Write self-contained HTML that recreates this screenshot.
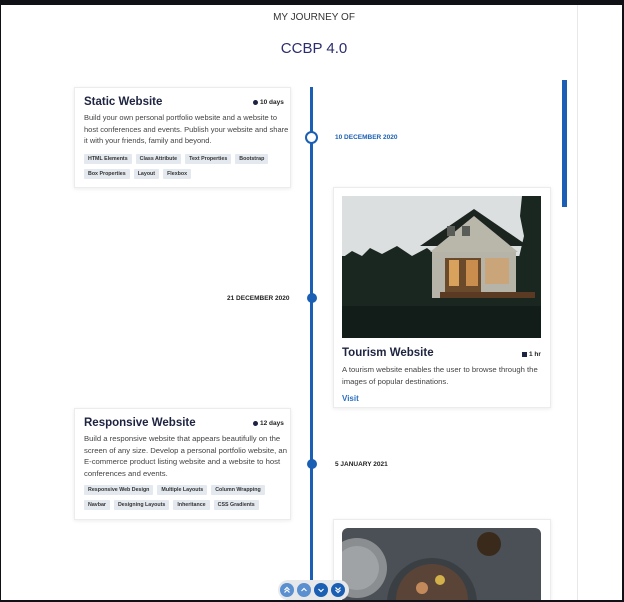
<!DOCTYPE html>
<html><head><meta charset="utf-8"><style>
*{margin:0;padding:0;box-sizing:border-box}
body{width:624px;height:602px;background:#0f1117;position:relative;overflow:hidden;font-family:"Liberation Sans",sans-serif}
.page{position:absolute;left:1px;top:5px;width:621px;height:595px;background:#fff;overflow:hidden}
.abs{position:absolute}
.h1{left:0;width:626px;text-align:center;top:7px;font-size:10px;color:#333;}
.h2{left:0;width:626px;text-align:center;top:35px;font-size:15px;color:#2b2d6e;}
.card{position:absolute;background:#fff;border:1px solid #ececec;box-shadow:0 1px 4px rgba(0,0,0,0.08);overflow:hidden}
.title{position:absolute;font-weight:bold;font-size:11.5px;color:#1d2340}
.dur{position:absolute;font-size:6.5px;font-weight:bold;color:#222}
.dur i{display:inline-block;width:5px;height:5px;border-radius:50%;background:#1d2340;margin-right:2px;vertical-align:-0.5px}
.desc{position:absolute;font-size:7.7px;line-height:11.5px;color:#444}
.tags{position:absolute;display:flex;flex-wrap:wrap;row-gap:5px;column-gap:4px}
.tag{display:block;background:#e3e9ef;font-size:5.3px;line-height:10px;height:10px;font-weight:bold;color:#333;padding:0 4px;border-radius:1px}
.date{position:absolute;font-size:6.5px;font-weight:bold;color:#222}
.nb{position:absolute;top:578px;width:14px;height:14px;border-radius:50%}
</style></head><body>
<div class="page">
<div class="abs h1">MY JOURNEY OF</div>
<div class="abs h2">CCBP 4.0</div>
<div class="abs" style="left:309px;top:82px;width:3px;height:520px;background:#1a5fb4"></div>
<div class="abs" style="left:304px;top:126px;width:13px;height:13px;border-radius:50%;border:2px solid #1a5fb4;background:#fff"></div>
<div class="abs" style="left:306px;top:288px;width:10px;height:10px;border-radius:50%;background:#1a5fb4"></div>
<div class="abs" style="left:306px;top:454px;width:10px;height:10px;border-radius:50%;background:#1a5fb4"></div>
<div class="date" style="left:334px;top:129px;color:#1a5fb4">10 DECEMBER 2020</div>
<div class="date" style="left:226px;top:290px">21 DECEMBER 2020</div>
<div class="date" style="left:334px;top:456px">5 JANUARY 2021</div>
<div class="abs" style="left:576px;top:0;width:1px;height:595px;background:#e8e8e8"></div>
<div class="abs" style="left:561px;top:75px;width:5px;height:127px;background:#1a5fb4"></div>
<!-- card 1 -->
<div class="card" style="left:73px;top:82px;width:217px;height:101px">
<div class="title" style="left:9px;top:8px">Static Website</div>
<div class="dur" style="left:178px;top:11px"><i></i>10 days</div>
<div class="desc" style="left:9px;top:24px;width:206px;font-size:7.5px">Build your own personal portfolio website and a website to host conferences and events. Publish your website and share it with your friends, family and beyond.</div>
<div class="tags" style="left:9px;top:66px;width:205px"><span class="tag">HTML Elements</span><span class="tag">Class Attribute</span><span class="tag">Text Properties</span><span class="tag">Bootstrap</span><span class="tag">Box Properties</span><span class="tag">Layout</span><span class="tag">Flexbox</span></div>
</div>
<!-- card 2 -->
<div class="card" style="left:332px;top:182px;width:218px;height:221px">
<svg class="abs" style="left:8px;top:8px" width="199" height="142" viewBox="0 0 199 142">
<rect width="199" height="142" fill="#dcdfe0"/>
<rect y="60" width="199" height="82" fill="#1a2620"/>
<path d="M0 62 L10 55 L20 60 L28 52 L40 58 L55 50 L70 60 L85 52 L95 60 L0 70Z" fill="#1a2620"/>
<path d="M180 0 L199 0 L199 80 L175 70 L182 40 L178 20Z" fill="#1a2620"/>
<rect y="110" width="199" height="32" fill="#121c18"/>
<path d="M78 50 L132 13 L186 50Z" fill="#1c2420"/>
<path d="M88 56 L132 20 L176 56Z" fill="#b9b7aa"/>
<rect x="90" y="56" width="84" height="46" fill="#b6b4a8"/>
<rect x="103" y="62" width="36" height="34" fill="#6b4a2c"/>
<rect x="107" y="64" width="10" height="26" fill="#d9a25c"/>
<rect x="124" y="64" width="12" height="26" fill="#c98e4e"/>
<rect x="143" y="62" width="24" height="26" fill="#caa57a"/>
<rect x="105" y="30" width="8" height="10" fill="#5a5c58"/>
<rect x="120" y="30" width="8" height="10" fill="#5a5c58"/>
<rect x="98" y="96" width="95" height="6" fill="#5a3a22"/>
</svg>
<div class="title" style="left:8px;top:159px">Tourism Website</div>
<div class="dur" style="left:188px;top:163px"><i style="border-radius:0"></i>1 hr</div>
<div class="desc" style="left:8px;top:176px;width:205px">A tourism website enables the user to browse through the images of popular destinations.</div>
<div class="abs" style="left:8px;top:206px;font-size:8px;font-weight:bold;color:#2a6fc0">Visit</div>
</div>
<!-- card 3 -->
<div class="card" style="left:73px;top:403px;width:217px;height:112px">
<div class="title" style="left:9px;top:8px">Responsive Website</div>
<div class="dur" style="left:178px;top:11px"><i></i>12 days</div>
<div class="desc" style="left:9px;top:24px;width:203px">Build a responsive website that appears beautifully on the screen of any size. Develop a personal portfolio website, an E-commerce product listing website and a website to host conferences and events.</div>
<div class="tags" style="left:9px;top:76px;width:205px"><span class="tag">Responsive Web Design</span><span class="tag">Multiple Layouts</span><span class="tag">Column Wrapping</span><span class="tag">Navbar</span><span class="tag">Designing Layouts</span><span class="tag">Inheritance</span><span class="tag">CSS Gradients</span></div>
</div>
<!-- card 4 -->
<div class="card" style="left:332px;top:514px;width:218px;height:81px;border-bottom:none">
<svg class="abs" style="left:8px;top:8px" width="199" height="80" viewBox="0 0 199 80">
<rect width="199" height="80" rx="6" fill="#4a5056"/>
<circle cx="15" cy="40" r="30" fill="#8a8e90"/>
<circle cx="15" cy="40" r="22" fill="#9fa3a5"/>
<circle cx="90" cy="75" r="45" fill="#3a3f44"/>
<circle cx="90" cy="72" r="36" fill="#5a4438"/>
<circle cx="80" cy="60" r="6" fill="#c28a5a"/>
<circle cx="98" cy="52" r="5" fill="#d2b04a"/>
<circle cx="147" cy="16" r="12" fill="#3a2a1c"/>
</svg>
</div>
<div class="abs" style="left:277px;top:575px;width:71px;height:20px;border-radius:10px;background:#e6e8ea"></div>
<svg class="nb" style="left:279px;background:#5b8fd0" viewBox="0 0 14 14"><path d="M4.5 7 L7 4.5 L9.5 7 M4.5 9.5 L7 7 L9.5 9.5" stroke="#fff" stroke-width="1.2" fill="none"/></svg>
<svg class="nb" style="left:296px;background:#5b8fd0" viewBox="0 0 14 14"><path d="M4.5 8 L7 5.5 L9.5 8" stroke="#fff" stroke-width="1.2" fill="none"/></svg>
<svg class="nb" style="left:313px;background:#1a5fb4" viewBox="0 0 14 14"><path d="M4.5 6 L7 8.5 L9.5 6" stroke="#fff" stroke-width="1.2" fill="none"/></svg>
<svg class="nb" style="left:330px;background:#1a5fb4" viewBox="0 0 14 14"><path d="M4.5 4.5 L7 7 L9.5 4.5 M4.5 7 L7 9.5 L9.5 7" stroke="#fff" stroke-width="1.2" fill="none"/></svg>
</div>
</body></html>
